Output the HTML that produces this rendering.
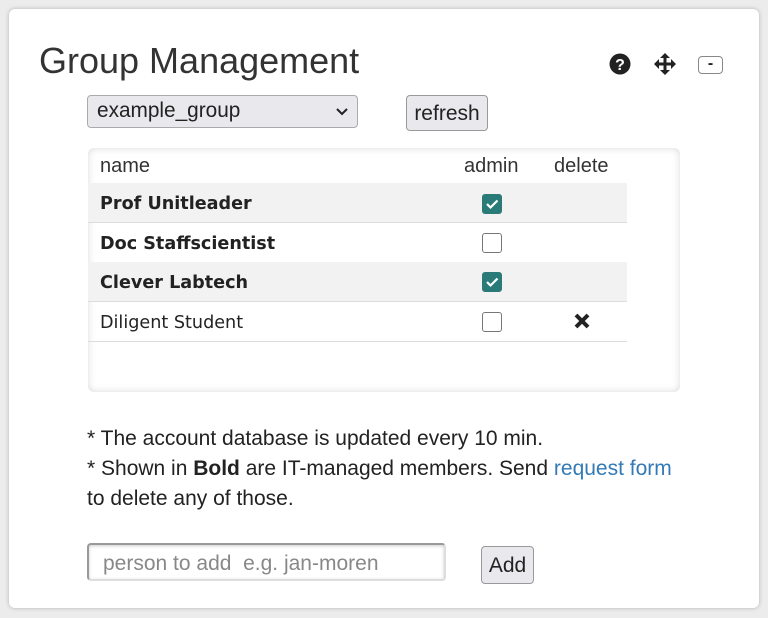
<!DOCTYPE html>
<html><head><style>
body{margin:0;width:768px;height:618px;background:#ececec;font-family:"Liberation Sans",sans-serif;color:#222;position:relative;overflow:hidden}
.card{position:absolute;left:9px;top:9px;width:750px;height:599px;background:#fff;border-radius:6px;box-shadow:0 0 4px rgba(0,0,0,.25)}
.a{position:absolute}
h1{position:absolute;left:39px;top:40px;margin:0;font-weight:normal;font-size:36px;color:#333;line-height:42px}
.sel{left:87px;top:95px;width:271px;height:33px;border:1px solid #aaa;border-radius:4px;background:#e9e9ed;box-sizing:border-box;font-size:20.8px;padding:3px 9px;color:#222}
.btn{border:1px solid #999;border-radius:4px;background:#e9e9ed;box-sizing:border-box;font-size:21px;text-align:center;color:#222}
.box{left:88px;top:148px;width:592px;height:244px;border-radius:6px;box-shadow:inset 0 0 8px rgba(0,0,0,.15);background:#fff}
.row{position:absolute;left:88px;width:539px;border-bottom:1px solid #ddd;font-family:"DejaVu Sans",sans-serif;font-size:17.6px}
.row span{position:absolute;left:12px}
.cb{position:absolute;left:394px;width:20px;height:20px;border:1px solid #777;border-radius:3px;box-sizing:border-box;background:#fff}
.cb.on{background:#2a7a78;border-color:#2a7a78}
.note{left:87px;font-size:21px;line-height:30px;color:#222}
</style></head><body>
<div class="card"></div>
<h1>Group Management</h1>
<svg class="a" style="left:609px;top:53px" width="22" height="22" viewBox="0 0 22 22"><circle cx="11" cy="11" r="10.5" fill="#222"/><text x="11" y="17" text-anchor="middle" font-family="Liberation Sans" font-weight="bold" font-size="16" fill="#fff">?</text></svg>
<svg class="a" style="left:654px;top:53px" width="22" height="22" viewBox="0 0 22 22" fill="#222"><path d="M11 0l5 5h-3.5v4.5H17V6l5 5-5 5v-3.5h-4.5V17H16l-5 5-5-5h3.5v-4.5H5V16l-5-5 5-5v3.5h4.5V5H6z"/></svg>
<div class="a btn" style="left:698px;top:56px;width:25px;height:18px;font-size:16px;font-weight:bold;line-height:14px;background:#fff;border-color:#888">-</div>
<div class="a sel">example_group<svg style="position:absolute;right:9px;top:12px" width="12" height="8" viewBox="0 0 12 8"><path d="M1 1l5 5 5-5" stroke="#222" stroke-width="2" fill="none"/></svg></div>
<div class="a btn" style="left:406px;top:95px;width:82px;height:36px;line-height:36px">refresh</div>
<div class="a box"></div>
<div class="row" style="top:148px;height:35px;font-family:'Liberation Sans',sans-serif;font-size:20px;color:#333"><span style="top:7px">name</span><span style="left:376px;top:7px">admin</span><span style="left:466px;top:7px">delete</span></div>
<div class="row" style="top:183px;height:39px;background:#f2f2f2;font-weight:bold"><span style="top:11px">Prof Unitleader</span><div class="cb on" style="top:11px"><svg width="18" height="18" viewBox="0 0 18 18"><path d="M4 9l3.5 3.5 7-7" stroke="#fff" stroke-width="2.2" fill="none"/></svg></div></div>
<div class="row" style="top:222px;height:40px;font-weight:bold"><span style="top:12px">Doc Staffscientist</span><div class="cb" style="top:11px"></div></div>
<div class="row" style="top:262px;height:39px;background:#f2f2f2;font-weight:bold"><span style="top:11px">Clever Labtech</span><div class="cb on" style="top:10px"><svg width="18" height="18" viewBox="0 0 18 18"><path d="M4 9l3.5 3.5 7-7" stroke="#fff" stroke-width="2.2" fill="none"/></svg></div></div>
<div class="row" style="top:301px;height:40px"><span style="top:12px">Diligent Student</span><div class="cb" style="top:11px"></div><svg style="position:absolute;left:485px;top:11px" width="18" height="18" viewBox="0 0 18 18"><path d="M3 3l12 12M15 3L3 15" stroke="#222" stroke-width="4"/></svg></div>
<div class="a note" style="top:424px">* The account database is updated every 10 min.<br>* Shown in <b>Bold</b> are IT-managed members. Send <span style="color:#337ab7">request form</span><br>to delete any of those.</div>
<div class="a" style="left:87px;top:543px;width:359px;height:38px;border:2px solid #999;border-bottom-color:#ddd;border-right-color:#ddd;border-radius:4px;box-sizing:border-box;box-shadow:inset 0 1px 3px rgba(0,0,0,.2);font-size:21px;color:#888;padding:7px 14px">person to add&nbsp; e.g. jan-moren</div>
<div class="a btn" style="left:481px;top:546px;width:53px;height:38px;line-height:38px">Add</div>
</body></html>
